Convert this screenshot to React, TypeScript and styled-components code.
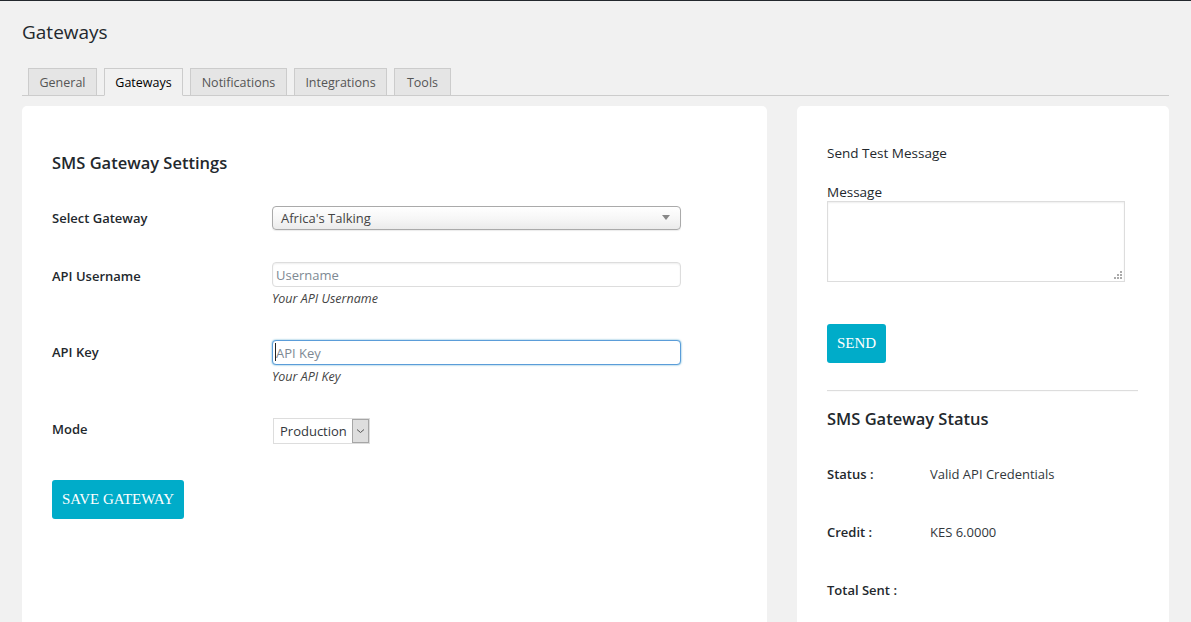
import React from "react";
import styled, { createGlobalStyle } from "styled-components";

const Global = createGlobalStyle`
  html, body { margin: 0; padding: 0; background: #f1f1f1; overflow: hidden; }
  body {
    font-family: "Open Sans", "Noto Sans", sans-serif;
    font-size: 13px;
    color: #444;
  }
  * { box-sizing: border-box; }
`;

const Page = styled.div`
  height: 622px;
  overflow: hidden;
  border-top: 1px solid #23282d;
  padding: 0 22px;
`;

const Title = styled.h1`
  margin: 0;
  padding-top: 18px;
  font-size: 19px;
  font-weight: 400;
  line-height: 26px;
  color: #23282d;
`;

const TabBar = styled.nav`
  display: flex;
  gap: 7px;
  margin-top: 23px;
  padding-left: 6px;
  border-bottom: 1px solid #ccc;
`;

const Tab = styled.a<{ $active?: boolean; $w: number }>`
  display: block;
  width: ${(p) => p.$w}px;
  height: 28px;
  margin-bottom: -1px;
  border: 1px solid #ccc;
  border-bottom-color: ${(p) => (p.$active ? "#f1f1f1" : "#ccc")};
  background: ${(p) => (p.$active ? "#f1f1f1" : "#e5e5e5")};
  color: ${(p) => (p.$active ? "#000" : "#555")};
  font-size: 12.5px;
  line-height: 27px;
  text-align: center;
  text-decoration: none;
`;

const Columns = styled.div`
  display: grid;
  grid-template-columns: 745px 372px;
  gap: 30px;
  margin-top: 10px;
`;

const Card = styled.section<{ $pad: string }>`
  height: 516px;
  background: #fff;
  border-radius: 5px 5px 0 0;
  padding: ${(p) => p.$pad};
`;

const Heading = styled.h2<{ $mt?: number }>`
  margin: ${(p) => p.$mt ?? 0}px 0 0;
  font-size: 16.5px;
  font-weight: 600;
  line-height: 22px;
  color: #23282d;
`;

const Form = styled.div`
  display: flex;
  flex-direction: column;
  gap: 32px;
  margin-top: 32px;
`;

const Row = styled.div`
  display: grid;
  grid-template-columns: 220px 1fr;
  align-items: start;
`;

const Label = styled.label<{ $h: number; $pt?: number }>`
  padding-top: ${(p) => p.$pt ?? 0}px;
  font-weight: 600;
  font-size: 13px;
  line-height: ${(p) => p.$h}px;
  color: #23282d;
`;

const SelectBox = styled.div`
  position: relative;
  width: 409px;
  height: 24px;
  padding-left: 8px;
  border: 1px solid #aaa;
  border-radius: 4px;
  background: linear-gradient(to bottom, #fff 0%, #f6f6f6 55%, #ebebeb 100%);
  box-shadow: 0 1px 1px rgba(0, 0, 0, 0.08);
  font-size: 13px;
  line-height: 22px;
  color: #444;
`;

const Triangle = styled.span`
  position: absolute;
  right: 10px;
  top: 8px;
  width: 0;
  height: 0;
  border-left: 4px solid transparent;
  border-right: 4px solid transparent;
  border-top: 5px solid #888;
`;

const FieldWrap = styled.div`
  position: relative;
  width: 409px;
`;

const TextInput = styled.input<{ $focus?: boolean }>`
  display: block;
  width: 409px;
  height: 25px;
  margin: 0;
  padding: 0 3px;
  border: 1px solid ${(p) => (p.$focus ? "#5b9dd9" : "#ddd")};
  border-radius: 4px;
  box-shadow: ${(p) =>
    p.$focus ? "0 0 2px rgba(30, 140, 190, 0.8)" : "inset 0 1px 2px rgba(0, 0, 0, 0.07)"};
  font-family: "Open Sans", "Noto Sans", sans-serif;
  font-size: 13px;
  color: #32373c;
  outline: none;
  &::placeholder { color: #7e8993; }
`;

const Caret = styled.span`
  position: absolute;
  left: 3px;
  top: 3px;
  width: 1px;
  height: 18px;
  background: #222;
`;

const Description = styled.p`
  margin: 3px 0 0;
  font-size: 12.5px;
  font-style: italic;
  line-height: 18px;
  color: #444;
`;

const ModeSelect = styled.div`
  display: flex;
  width: 97px;
  height: 26px;
  margin-left: 1px;
  border: 1px solid #ddd;
  background: #fff;
`;

const ModeValue = styled.span`
  flex: 1;
  padding-left: 6px;
  font-size: 13px;
  line-height: 24px;
  color: #32373c;
`;

const ArrowBox = styled.span`
  display: flex;
  align-items: center;
  justify-content: center;
  width: 17px;
  height: 24px;
  border: 1px solid #a6a6a6;
  background: #dedede;
`;

const Button = styled.button<{ $w: number; $mt: number }>`
  display: block;
  width: ${(p) => p.$w}px;
  height: 39px;
  margin-top: ${(p) => p.$mt}px;
  padding: 0;
  border: none;
  border-radius: 3px;
  background: #00acc9;
  color: #fff;
  font-family: "Liberation Serif", "Times New Roman", serif;
  font-size: 15px;
  cursor: pointer;
`;

const SubTitle = styled.div`
  font-size: 13.5px;
  line-height: 18px;
  color: #23282d;
`;

const FieldLabel = styled.div`
  margin-top: 21px;
  font-size: 13.5px;
  line-height: 18px;
  color: #23282d;
`;

const AreaWrap = styled.div`
  position: relative;
  width: 298px;
`;

const TextArea = styled.textarea`
  display: block;
  width: 298px;
  height: 81px;
  margin: 0;
  border: 1px solid #ddd;
  box-shadow: inset 0 1px 2px rgba(0, 0, 0, 0.07);
  resize: none;
  outline: none;
`;

const Grip = styled.svg`
  position: absolute;
  right: 3px;
  bottom: 3px;
`;

const Rule = styled.hr`
  margin: 27px 0 0;
  border: 0;
  border-top: 1px solid #ddd;
  border-bottom: 1px solid #fafafa;
`;

const StatusList = styled.div`
  display: flex;
  flex-direction: column;
  gap: 40px;
  margin-top: 35px;
`;

const StatusRow = styled.div`
  display: grid;
  grid-template-columns: 103px 1fr;
  line-height: 18px;
`;

const StatusKey = styled.span`
  font-weight: 600;
  font-size: 13px;
  color: #23282d;
`;

const StatusVal = styled.span`
  font-size: 13px;
  color: #32373c;
`;

const tabs = [
  { name: "General", w: 69 },
  { name: "Gateways", w: 79, active: true },
  { name: "Notifications", w: 97 },
  { name: "Integrations", w: 93 },
  { name: "Tools", w: 57 },
];

const status = [
  { k: "Status :", v: "Valid API Credentials" },
  { k: "Credit :", v: "KES 6.0000" },
  { k: "Total Sent :", v: "" },
];

export default function App() {
  return (
    <>
      <Global />
      <Page>
        <Title>Gateways</Title>
        <TabBar>
          {tabs.map((t) => (
            <Tab key={t.name} $w={t.w} $active={t.active} href="#">
              {t.name}
            </Tab>
          ))}
        </TabBar>
        <Columns>
          <Card $pad="46px 30px 0">
            <Heading>SMS Gateway Settings</Heading>
            <Form>
              <Row>
                <Label $h={24}>Select Gateway</Label>
                <SelectBox>
                  Africa's Talking
                  <Triangle />
                </SelectBox>
              </Row>
              <Row>
                <Label $h={25} $pt={2}>API Username</Label>
                <div>
                  <TextInput placeholder="Username" />
                  <Description>Your API Username</Description>
                </div>
              </Row>
              <Row>
                <Label $h={25}>API Key</Label>
                <div>
                  <FieldWrap>
                    <TextInput $focus placeholder="API Key" />
                    <Caret />
                  </FieldWrap>
                  <Description>Your API Key</Description>
                </div>
              </Row>
              <Row>
                <Label $h={23}>Mode</Label>
                <ModeSelect>
                  <ModeValue>Production</ModeValue>
                  <ArrowBox>
                    <svg width="9" height="6" viewBox="0 0 9 6">
                      <path d="M1 1.5 L4.5 4.5 L8 1.5" fill="none" stroke="#555" strokeWidth="1" />
                    </svg>
                  </ArrowBox>
                </ModeSelect>
              </Row>
            </Form>
            <Button $w={132} $mt={36}>SAVE GATEWAY</Button>
          </Card>
          <Card $pad="38px 31px 0 30px">
            <SubTitle>Send Test Message</SubTitle>
            <FieldLabel>Message</FieldLabel>
            <AreaWrap>
              <TextArea />
              <Grip width="8" height="8" viewBox="0 0 8 8">
                <rect x="6" y="0" width="2" height="2" fill="#aaa" />
                <rect x="3" y="3" width="2" height="2" fill="#aaa" />
                <rect x="6" y="3" width="2" height="2" fill="#aaa" />
                <rect x="0" y="6" width="2" height="2" fill="#aaa" />
                <rect x="3" y="6" width="2" height="2" fill="#aaa" />
                <rect x="6" y="6" width="2" height="2" fill="#aaa" />
              </Grip>
            </AreaWrap>
            <Button $w={59} $mt={42}>SEND</Button>
            <Rule />
            <Heading $mt={16}>SMS Gateway Status</Heading>
            <StatusList>
              {status.map((s) => (
                <StatusRow key={s.k}>
                  <StatusKey>{s.k}</StatusKey>
                  <StatusVal>{s.v}</StatusVal>
                </StatusRow>
              ))}
            </StatusList>
          </Card>
        </Columns>
      </Page>
    </>
  );
}
